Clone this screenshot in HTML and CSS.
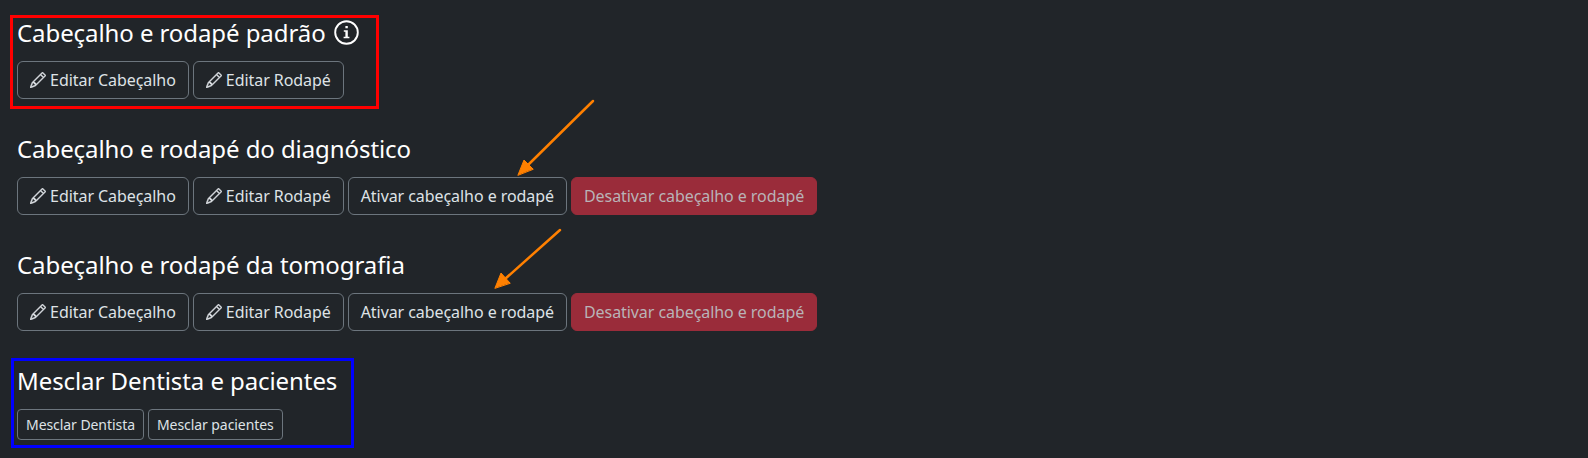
FILE: index.html
```html
<!DOCTYPE html>
<html lang="pt-BR">
<head>
    <meta charset="UTF-8">
    <title>Cabeçalho e rodapé</title>
    <link rel="stylesheet" href="styles.css">
</head>
<body>
    <svg width="0" height="0" class="defs">
        <symbol id="pencil" viewBox="0 0 16 16">
            <path fill="currentColor" stroke="currentColor" stroke-width="0.45" d="M12.146.146a.5.5 0 0 1 .708 0l3 3a.5.5 0 0 1 0 .708l-10 10a.5.5 0 0 1-.168.11l-5 2a.5.5 0 0 1-.65-.65l2-5a.5.5 0 0 1 .11-.168l10-10zM11.207 2.5 13.5 4.793 14.793 3.5 12.5 1.207 11.207 2.5zm1.586 3L10.5 3.207 4 9.707V10h.5a.5.5 0 0 1 .5.5v.5h.5a.5.5 0 0 1 .5.5v.5h.293l6.5-6.5zm-9.761 5.175-.106.106-1.528 3.821 3.821-1.528.106-.106A.5.5 0 0 1 5 12.5V12h-.5a.5.5 0 0 1-.5-.5V11h-.5a.5.5 0 0 1-.468-.325z"/>
        </symbol>
    </svg>

    <main>
        <div class="section">
            <h4>Cabeçalho e rodapé padrão
                <svg class="info" viewBox="0 0 25 25">
                    <circle cx="12.5" cy="12.5" r="11.3" fill="none" stroke="currentColor" stroke-width="1.9"/>
                    <path fill="currentColor" d="M11.400 6h2.400v2.300h-2.400zM9.800 10.200h4v6.500h1.600v1.600H9.600v-1.600h1.800v-4.900H9.800z"/>
                </svg>
            </h4>
            <div class="btn-row">
                <button class="btn"><svg class="pencil"><use href="#pencil"/></svg> Editar Cabeçalho</button>
                <button class="btn"><svg class="pencil"><use href="#pencil"/></svg> Editar Rodapé</button>
            </div>
        </div>

        <div class="section">
            <h4>Cabeçalho e rodapé do diagnóstico</h4>
            <div class="btn-row">
                <button class="btn"><svg class="pencil"><use href="#pencil"/></svg> Editar Cabeçalho</button>
                <button class="btn"><svg class="pencil"><use href="#pencil"/></svg> Editar Rodapé</button>
                <button class="btn">Ativar cabeçalho e rodapé</button>
                <button class="btn btn-danger" disabled>Desativar cabeçalho e rodapé</button>
            </div>
        </div>

        <div class="section">
            <h4>Cabeçalho e rodapé da tomografia</h4>
            <div class="btn-row">
                <button class="btn"><svg class="pencil"><use href="#pencil"/></svg> Editar Cabeçalho</button>
                <button class="btn"><svg class="pencil"><use href="#pencil"/></svg> Editar Rodapé</button>
                <button class="btn">Ativar cabeçalho e rodapé</button>
                <button class="btn btn-danger" disabled>Desativar cabeçalho e rodapé</button>
            </div>
        </div>

        <div class="section">
            <h4>Mesclar Dentista e pacientes</h4>
            <div class="btn-row">
                <button class="btn btn-sm">Mesclar Dentista</button>
                <button class="btn btn-sm">Mesclar pacientes</button>
            </div>
        </div>
    </main>

    <!-- marcacoes por cima da tela -->
    <div class="mark mark-red"></div>
    <div class="mark mark-blue"></div>
    <svg class="arrows" width="1588" height="458" viewBox="0 0 1588 458">
        <g fill="#ff8000" stroke="#ff8000" stroke-linecap="round">
            <path d="M593 101 528 165" stroke-width="2.5" fill="none"/>
            <path d="M518 175 524 160 533 169z" stroke-width="1"/>
            <path d="M560 230 505 279" stroke-width="2.5" fill="none"/>
            <path d="M495 288 501 273 510 283z" stroke-width="1"/>
        </g>
    </svg>
</body>
</html>
```

FILE: styles.css
```css
body {
    margin: 0;
    padding: 18px 0 0 17px;
    background-color: #212529;
    color: #fff;
    font-family: "Noto Sans", sans-serif;
    font-size: 16px;
    overflow: hidden;
}
.defs {
    display: block;
    height: 0;
}
.section {
    margin-bottom: 35px;
}
.section:last-child {
    margin-bottom: 0;
}
h4 {
    margin: 0 0 14px 0;
    font-size: 24px;
    font-weight: 400;
    line-height: 29px;
    letter-spacing: -0.08px;
    display: flex;
    align-items: center;
    gap: 8px;
}
.info {
    width: 25px;
    height: 25px;
}
.btn-row {
    display: flex;
    gap: 4px;
}
.btn {
    height: 38px;
    padding: 0 12px;
    background: transparent;
    color: #dee2e6;
    border: 1px solid #6c757d;
    border-radius: 6px;
    font-family: inherit;
    font-size: 16px;
    line-height: 24px;
    letter-spacing: -0.065px;
    cursor: pointer;
    white-space: nowrap;
}
.pencil {
    width: 16px;
    height: 16px;
    vertical-align: -2px;
}
.btn-danger {
    background-color: #9a2c3a;
    border-color: #9a2c3a;
    color: #b9b3b7;
    cursor: default;
}
.btn-sm {
    height: 31px;
    padding: 0 8px;
    font-size: 14px;
    border-radius: 4px;
}
.mark {
    position: absolute;
    box-sizing: border-box;
    border: 3px solid;
}
.mark-red {
    left: 10px;
    top: 15px;
    width: 369px;
    height: 94px;
    border-color: #ff0000;
}
.mark-blue {
    left: 11px;
    top: 358px;
    width: 343px;
    height: 90px;
    border-color: #0000ff;
}
.arrows {
    position: absolute;
    left: 0;
    top: 0;
}
```
